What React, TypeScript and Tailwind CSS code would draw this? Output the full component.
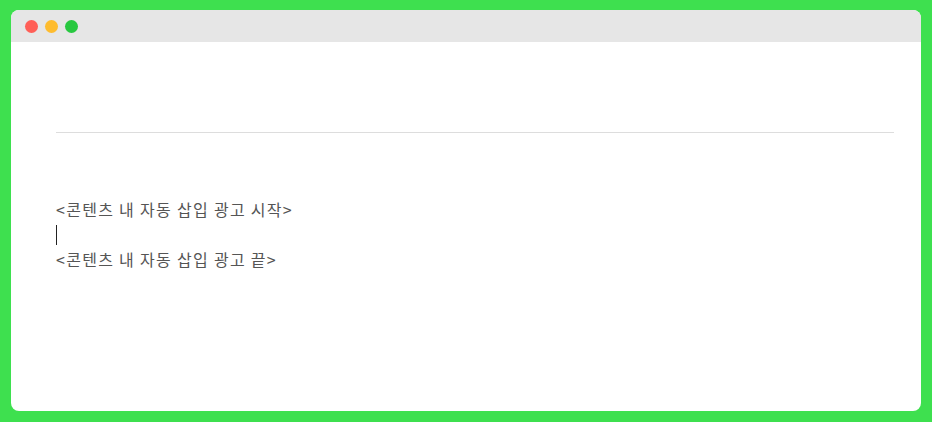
export default function App() {
  return (
    <div className="w-[932px] h-[422px] bg-[#3ee04f] pt-[10px] pb-[11px] px-[11px]">
      <div className="flex flex-col h-full bg-white rounded-[8px] overflow-hidden">
        <div className="flex items-center gap-[7px] h-[32px] px-[14px] bg-[#e6e6e6] shrink-0">
          <span className="w-[13px] h-[13px] rounded-full bg-[#ff5f57]" />
          <span className="w-[13px] h-[13px] rounded-full bg-[#febc2e]" />
          <span className="w-[13px] h-[13px] rounded-full bg-[#28c840]" />
        </div>
        <div className="pl-[45px] pr-[27px] pt-[90px]">
          <div className="h-px bg-[#dddddd]" />
          <div
            className="mt-[64px] text-[16px] leading-[25px] tracking-[1.3px] text-[#555555]"
            style={{ fontFamily: '"Noto Sans CJK KR", "Noto Sans", sans-serif' }}
          >
            <p>&lt;콘텐츠 내 자동 삽입 광고 시작&gt;</p>
            <div className="h-[25px] flex items-center">
              <span className="w-px h-[20px] bg-[#222222]" />
            </div>
            <p>&lt;콘텐츠 내 자동 삽입 광고 끝&gt;</p>
          </div>
        </div>
      </div>
    </div>
  )
}
